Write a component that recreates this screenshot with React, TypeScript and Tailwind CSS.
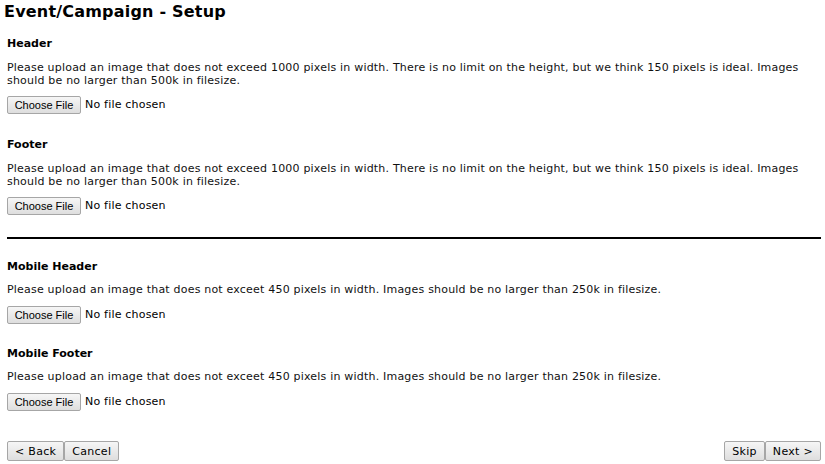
import React from "react";

const verdana = { fontFamily: '"DejaVu Sans", Verdana, sans-serif' };

function FileRow() {
  return (
    <div className="flex items-center h-[18px]">
      <button className="h-[18px] w-[74px] border border-[#a6a6a6] rounded-[2px] bg-gradient-to-b from-[#f6f6f6] to-[#dedede] text-[11px] leading-none text-black font-['Liberation_Sans',Arial,sans-serif]">
        Choose File
      </button>
      <span className="ml-[4px] text-[11px] tracking-[0.2px] text-black">No file chosen</span>
    </div>
  );
}

function Section({
  title,
  text,
  className = "",
  paraGap = "mt-[10px]",
  btnGap = "mt-[9px]",
}: {
  title: string;
  text: string;
  className?: string;
  paraGap?: string;
  btnGap?: string;
}) {
  return (
    <div className={className}>
      <div className="text-[11px] font-bold leading-[14px] text-black">{title}</div>
      <p className={`${paraGap} text-[11px] leading-[13px] tracking-[0.2px] text-[#111] w-[808px]`}>{text}</p>
      <div className={btnGap}>
        <FileRow />
      </div>
    </div>
  );
}

function NavBtn({ children }: { children: React.ReactNode }) {
  return (
    <button className="h-[20px] px-[7px] border border-[#a6a6a6] rounded-[2px] bg-gradient-to-b from-[#f6f6f6] to-[#dedede] text-[11px] tracking-[0.3px] leading-none text-black">
      {children}
    </button>
  );
}

export default function App() {
  const long =
    "Please upload an image that does not exceed 1000 pixels in width. There is no limit on the height, but we think 150 pixels is ideal. Images should be no larger than 500k in filesize.";
  const short =
    "Please upload an image that does not exceet 450 pixels in width. Images should be no larger than 250k in filesize.";
  return (
    <div className="w-[825px] h-[464px] bg-white relative" style={verdana}>
      <h1 className="pl-[4px] pt-[2px] text-[16px] font-bold leading-[20px] tracking-[0.2px] text-black">
        Event/Campaign - Setup
      </h1>
      <div className="pl-[7px] w-[821px]">
        <Section className="mt-[15px]" title="Header" text={long} />
        <Section className="mt-[24px]" title="Footer" text={long} />
        <div className="mt-[22px] h-[2px] bg-black" />
        <Section className="mt-[21px]" title="Mobile Header" text={short} paraGap="mt-[9px]" btnGap="mt-[10px]" />
        <Section className="mt-[23px]" title="Mobile Footer" text={short} paraGap="mt-[9px]" btnGap="mt-[10px]" />
        <div className="mt-[30px] flex justify-between">
          <div className="flex">
            <NavBtn>&lt; Back</NavBtn>
            <NavBtn>Cancel</NavBtn>
          </div>
          <div className="flex">
            <NavBtn>Skip</NavBtn>
            <NavBtn>Next &gt;</NavBtn>
          </div>
        </div>
      </div>
    </div>
  );
}
